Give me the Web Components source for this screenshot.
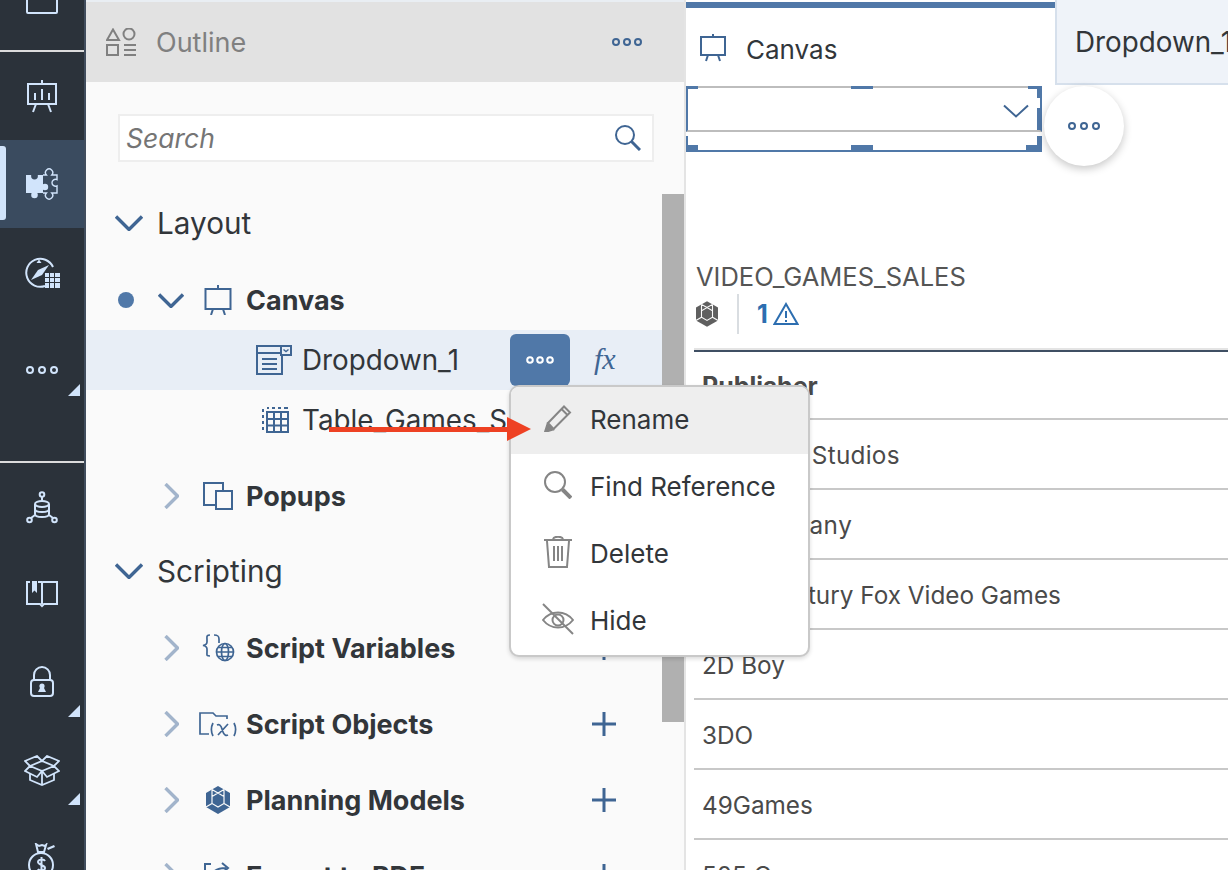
<!DOCTYPE html>
<html lang="en">
<head>
<meta charset="utf-8">
<title>Outline</title>
<style>
  html, body { margin: 0; padding: 0; height: 870px; overflow: hidden; background: #fff; }
  body { font-family: Inter, "Liberation Sans", sans-serif; color: #32363a; }
  svg { display: block; }
</style>
</head>
<body>

<app-shell>
  <side-rail slot="rail">
    <rail-button cut style="height:50px">
      <svg width="32" height="26" viewBox="0 0 32 26" fill="none" stroke="#d1e4fb" stroke-width="2"><path d="M1 -4V18a1 1 0 0 0 1 1H30a1 1 0 0 0 1-1V-4"/></svg>
    </rail-button>
    <rail-rule></rail-rule>
    <rail-button>
      <svg width="32" height="34" viewBox="0 0 32 34" fill="none" stroke="#d1e4fb" stroke-width="2"><path d="M16 1v4M2 5h28v20H2zM10 25l-3 8M22 25l3 8" /><path d="M9 21v-7M16 21V10M23 21v-7"/></svg>
    </rail-button>
    <rail-button active>
      <svg width="32" height="32" viewBox="0 0 32 32" fill="none"><rect x="0" y="7" width="17" height="18" fill="#d1e4fb"/><circle cx="8.5" cy="8" r="3.4" fill="#3a4b5f"/><circle cx="8.5" cy="27" r="3.3" fill="#d1e4fb"/><circle cx="19" cy="19" r="3.2" fill="#d1e4fb"/><path d="M17 7h3.4a3.6 3.6 0 1 1 5.4 0H31v4.6a3.5 3.5 0 1 0 0 6.3V25h-5.2a3.6 3.6 0 1 1-5.4 0H17" stroke="#d1e4fb" stroke-width="1.4"/></svg>
    </rail-button>
    <rail-button>
      <svg width="36" height="32" viewBox="0 0 36 32" fill="none"><path d="M21 30a14 14 0 1 1 8-19" stroke="#d1e4fb" stroke-width="2"/><path d="M7 24l7-10 11-5-7 10z" fill="#d1e4fb"/><path d="M15 3.5l2.5 3.5h-5z" fill="#d1e4fb"/><rect x="21" y="17" width="15" height="15" fill="#d1e4fb"/><path d="M21 21.500h15M21 26.500h15M25.500 17v15M30.500 17v15" stroke="#2b323a" stroke-width="1"/></svg>
    </rail-button>
    <rail-button more style="margin-top:10px;--tri-bottom:18px">
      <dots-icon color="#d1e4fb"></dots-icon>
    </rail-button>
    <rail-rule style="margin-top:47px"></rail-rule>
    <rail-button>
      <svg width="32" height="33" viewBox="0 0 32 33" fill="none" stroke="#d1e4fb" stroke-width="2"><circle cx="16" cy="3.5" r="2.3"/><path d="M16 6v4"/><ellipse cx="16" cy="13" rx="7" ry="3"/><path d="M9 13v10c0 4 14 4 14 0V13M9 18c0 4 14 4 14 0"/><circle cx="3.5" cy="29" r="2.3"/><circle cx="28.5" cy="29" r="2.3"/><path d="M9 24l-4 3M23 24l4 3"/></svg>
    </rail-button>
    <rail-button style="--nudge:-3px">
      <svg width="32" height="28" viewBox="0 0 32 28" fill="none" stroke="#d1e4fb" stroke-width="2"><path d="M4 2H1v22h13l2 2 2-2h13V2H17a2 2 0 0 0-1 1v21"/><path d="M12 2H16M16 24V2"/><path d="M6 1h5v12l-2.500-2.500L6 13z" fill="#d1e4fb" stroke="none"/></svg>
    </rail-button>
    <rail-button more style="--nudge:-3px">
      <svg width="24" height="31" viewBox="0 0 24 31" fill="none" stroke="#d1e4fb" stroke-width="2"><path d="M4 14V9a8 8 0 0 1 16 0v5"/><rect x="1" y="14" width="22" height="16" rx="3"/><circle cx="12" cy="20" r="2.600" fill="#d1e4fb" stroke="none"/><path d="M8 26l2-4h4l2 4z" fill="#d1e4fb" stroke="none"/></svg>
    </rail-button>
    <rail-button more style="--nudge:-2px">
      <svg width="36" height="31" viewBox="0 0 36 31" fill="none" stroke="#d1e4fb" stroke-width="1.800"><path d="M6 11L1 6l12-5 5 5 5-5 12 5-5 5-12-5z"/><path d="M6 11L1 16l12 6 5-6 5 6 12-6-5-5-12 5z"/><path d="M6 18v7l12 5 12-5v-7M18 16v14"/></svg>
    </rail-button>
    <rail-button style="--nudge:-2px">
      <svg width="28" height="30" viewBox="0 0 28 30" fill="none" stroke="#d1e4fb" stroke-width="2"><circle cx="13" cy="22" r="12"/><path d="M8 1l3 2 3-1 3 1 1-1-2 7h-6z"/><path d="M19 5l7-3 1 2-7 3z" fill="#d1e4fb" stroke="none"/><path d="M17 18c-1-2-7-2-7 1s7 3 7 6-6 3-7 1M13.500 14v16"/></svg>
    </rail-button>
  </side-rail>

  <outline-panel slot="outline">
    <outline-section label="Layout" open></outline-section>
    <outline-row label="Canvas" chevron="down" dot style="margin-top:17px">
      <svg slot="icon" width="28" height="30" viewBox="0 0 28 30" fill="none" stroke="#3f6593" stroke-width="2"><path d="M14 0v4M1.500 4h25v20h-25zM9 24l-2 6M19 24l2 6"/></svg>
    </outline-row>
    <outline-row label="Dropdown_1" leaf selected>
      <svg slot="icon" width="36" height="30" viewBox="0 0 36 30" fill="none" stroke="#3f6593" stroke-width="2"><path d="M25 1H1v28h25V10"/><path d="M1 8h24M6 14h15M6 19h15M6 24h15"/><rect x="25" y="1" width="10" height="9"/><path d="M27.500 4.500l2.500 2 2.500-2" stroke-width="1.400"/></svg>
      <more-button slot="actions" style="margin-right:24px"></more-button>
      <span slot="actions" class="fx">fx</span>
    </outline-row>
    <outline-row label="Table_Games_Sales" leaf style="--leaf-shift:4px">
      <svg slot="icon" width="28" height="26" viewBox="0 0 28 26" fill="none" stroke="#3f6593" stroke-width="2"><path d="M5 1h2M10 1h3M16 1h3M22 1h4" /><path d="M1 2v3M1 8v3M1 14v3M1 20v3"/><path d="M5 5h21v20H5zM5 12h21M5 18.500h21M12 5v20M19 5v20"/></svg>
    </outline-row>
    <outline-row label="Popups" chevron="right" style="margin-top:16px">
      <svg slot="icon" width="30" height="28" viewBox="0 0 30 28" fill="none" stroke="#3f6593" stroke-width="2"><path d="M13 23H1V1h19v8"/><path d="M13 9h16v18H13z"/></svg>
    </outline-row>
    <outline-section label="Scripting" open style="margin-top:15px"></outline-section>
    <outline-row label="Script Variables" chevron="right" style="margin-top:17px">
      <svg slot="icon" width="34" height="28" viewBox="0 0 34 28" fill="none" stroke="#3f6593" stroke-width="1.700"><path d="M9 1C5 1 6 3 6 6v2c0 2-1 3-4 3.500C5 12 6 13 6 15v3c0 3-1 4 3 4M13 1c4 0 5 1 5 4v4"/><circle cx="24" cy="18" r="8.500"/><ellipse cx="24" cy="18" rx="3.500" ry="8.500"/><path d="M15.500 18h17M17 13.500h14M17 22.500h14"/></svg>
      <plus-icon slot="actions" style="margin-right:45px"></plus-icon>
    </outline-row>
    <outline-row label="Script Objects" chevron="right" style="margin-top:16px">
      <svg slot="icon" width="38" height="25" viewBox="0 0 38 25" fill="none" stroke="#3f6593" stroke-width="1.700"><path d="M10 22H1V1h13l3 3h11v3"/><path d="M14 11c-2 4-2 9 0 13M35 11c2 4 2 9 0 13"/><path d="M18 13c2-1 4 0 5 4l1 3c1 3 3 4 5 3M19 23l10-11"/></svg>
      <plus-icon slot="actions" style="margin-right:45px"></plus-icon>
    </outline-row>
    <outline-row label="Planning Models" chevron="right" style="margin-top:16px">
      <cube-icon slot="icon" color="#3f6593" size="24"></cube-icon>
      <plus-icon slot="actions" style="margin-right:45px"></plus-icon>
    </outline-row>
    <outline-row label="Export to PDF" chevron="right" style="margin-top:16px">
      <svg slot="icon" width="30" height="28" viewBox="0 0 30 28" fill="none" stroke="#3f6593" stroke-width="2"><path d="M8 2H2v24h24v-8"/><path d="M9 14c1-6 6-8 14-8M19 1l6 5-6 5"/></svg>
      <plus-icon slot="actions" style="margin-right:45px"></plus-icon>
    </outline-row>
  </outline-panel>

  <canvas-pane slot="canvas">
    <games-table title="VIDEO_GAMES_SALES" head="Publisher">
      <table-row style="letter-spacing:.27px">10TACLE Studios</table-row>
      <table-row style="letter-spacing:.6px">1C Company</table-row>
      <table-row>20th Century Fox Video Games</table-row>
      <table-row>2D Boy</table-row>
      <table-row>3DO</table-row>
      <table-row>49Games</table-row>
      <table-row>505 Games</table-row>
    </games-table>
  </canvas-pane>

  <context-menu slot="overlay">
    <menu-entry label="Rename" active>
      <svg width="28" height="28" viewBox="0 0 28 28" fill="none" stroke="#858585" stroke-width="2"><path d="M4 19L20 2.500l6 6L9.500 25z"/><path d="M17.500 5l6 6"/><path d="M3.500 20l-2.500 8 8-2.500z" fill="#858585"/></svg>
    </menu-entry>
    <menu-entry label="Find Reference">
      <svg width="28" height="28" viewBox="0 0 28 28" fill="none" stroke="#858585" stroke-width="2"><circle cx="11" cy="11" r="10"/><path d="M18.500 18.500L27 27" stroke-width="4"/></svg>
    </menu-entry>
    <menu-entry label="Delete">
      <svg width="28" height="32" viewBox="0 0 28 32" fill="none" stroke="#858585" stroke-width="2"><path d="M0 4h28M9 3c1-3 9-3 10 0"/><path d="M3 5l2 26h18l2-26M10 10v15M14 10v15M18 10v15"/></svg>
    </menu-entry>
    <menu-entry label="Hide">
      <svg width="32" height="32" viewBox="0 0 32 32" fill="none" stroke="#858585" stroke-width="2"><path d="M1 1l30 30"/><path d="M1 17c8-10 22-10 30 0-8 10-22 10-30 0z"/><circle cx="16" cy="17" r="5.500"/></svg>
    </menu-entry>
  </context-menu>

  <red-arrow slot="overlay"></red-arrow>
</app-shell>

<script>
/* top level layout: rail, outline column, canvas, and a layer for the popup menu */
class AppShell extends HTMLElement {
  constructor() {
    super();
    this.attachShadow({ mode: 'open' }).innerHTML = `
      <style>
        :host { display: flex; position: relative; width: 1228px; height: 870px; overflow: hidden; }
      </style>
      <slot name="rail"></slot>
      <slot name="outline"></slot>
      <slot name="canvas"></slot>
      <slot name="overlay"></slot>
    `;
  }
}

class SideRail extends HTMLElement {
  constructor() {
    super();
    this.attachShadow({ mode: 'open' }).innerHTML = `
      <style>
        :host {
          display: flex; flex-direction: column; flex: none;
          width: 84px; height: 870px; overflow: hidden;
          background: #2b323a; border-right: 2px solid #414d5d;
        }
      </style>
      <slot></slot>
    `;
  }
}

class RailRule extends HTMLElement {
  constructor() {
    super();
    this.attachShadow({ mode: 'open' }).innerHTML = `
      <style>:host { display: block; flex: none; height: 2px; background: #dcdcdc; }</style>
    `;
  }
}

class RailButton extends HTMLElement {
  constructor() {
    super();
    this.attachShadow({ mode: 'open' }).innerHTML = `
      <style>
        :host {
          display: flex; flex: none; position: relative; height: 88px;
          align-items: center; justify-content: center;
        }
        :host([active]) { background: #3a4b5f; }
        :host([cut]) { align-items: flex-end; padding-bottom: 30px; height: 20px !important; }
        .pill { display: none; position: absolute; left: 0; top: 6px; bottom: 8px; width: 6px; background: #d1e4fb; border-radius: 0 3px 3px 0; }
        :host([active]) .pill { display: block; }
        .tri { display: none; position: absolute; right: 4px; bottom: var(--tri-bottom, 10px); width: 0; height: 0; border-left: 12px solid transparent; border-bottom: 12px solid #d1e4fb; }
        :host([more]) .tri { display: block; }
        .wrap { margin-top: var(--nudge, 0); }
      </style>
      <span class="pill"></span>
      <div class="wrap"><slot></slot></div>
      <span class="tri"></span>
    `;
  }
}

class DotsIcon extends HTMLElement {
  constructor() {
    super();
    const c = this.getAttribute('color') || '#3f6593';
    const narrow = this.hasAttribute('narrow');
    const step = narrow ? 11 : 12;
    const w = step * 2 + 8;
    this.attachShadow({ mode: 'open' }).innerHTML = `
      <style>:host { display: block; }</style>
      <svg style="display:block" width="${w}" height="8" viewBox="0 0 ${w} 8" fill="none" stroke="${c}" stroke-width="2">
        <circle cx="4" cy="4" r="3"/><circle cx="${4 + step}" cy="4" r="3"/><circle cx="${4 + step * 2}" cy="4" r="3"/>
      </svg>
    `;
  }
}

class CubeIcon extends HTMLElement {
  constructor() {
    super();
    const c = this.getAttribute('color');
    const s = +this.getAttribute('size');
    this.attachShadow({ mode: 'open' }).innerHTML = `
      <style>:host { display: block; }</style>
      <svg style="display:block" width="${s}" height="${Math.round(s * 28 / 24)}" viewBox="0 0 24 28" fill="none">
        <path d="M12 0l12 7v14l-12 7-12-7V7z" fill="${c}"/>
        <path d="M12 7l6 3.500v7L12 21l-6-3.500v-7zM6 3.500v7M18 3.500v7M6 3.500L12 7l6-3.500M6 17.500L0 21M18 17.500L24 21" stroke="#fafafa" stroke-width="1.200"/>
      </svg>
    `;
  }
}

class PlusIcon extends HTMLElement {
  constructor() {
    super();
    this.attachShadow({ mode: 'open' }).innerHTML = `
      <style>:host { display: block; width: 26px; height: 26px; }</style>
      <svg style="display:block" width="26" height="26" viewBox="0 0 26 26" stroke="#3f6593" stroke-width="3"><path d="M13 1v24M1 13h24"/></svg>
    `;
  }
}

class MoreButton extends HTMLElement {
  constructor() {
    super();
    this.attachShadow({ mode: 'open' }).innerHTML = `
      <style>
        :host {
          display: flex; align-items: center; justify-content: center;
          width: 60px; height: 52px; margin-top: 4px; align-self: flex-start;
          background: #5078a8; border-radius: 6px;
        }
        svg { display: block; }
      </style>
      <svg width="28" height="8" viewBox="0 0 28 8" fill="none" stroke="#fff" stroke-width="2">
        <circle cx="4" cy="4" r="2.800"/><circle cx="14" cy="4" r="2.800"/><circle cx="24" cy="4" r="2.800"/>
      </svg>
    `;
  }
}

class OutlinePanel extends HTMLElement {
  constructor() {
    super();
    this.attachShadow({ mode: 'open' }).innerHTML = `
      <style>
        :host {
          display: flex; flex-direction: column; flex: none; position: relative;
          width: 598px; height: 870px; background: #fafafa;
          border-top: 2px solid #e9eef3; box-sizing: border-box;
        }
        .head {
          display: flex; flex: none; align-items: center; height: 80px;
          padding: 0 42px 0 20px; background: #e2e2e2; color: #808080; font-size: 27px;
        }
        .head svg { display: block; margin-right: 20px; }
        .head .name { flex: 1; }
        .search {
          display: flex; flex: none; align-items: center; justify-content: space-between;
          margin: 32px 30px 31px 32px; height: 48px; box-sizing: border-box;
          padding: 0 11px 0 6px;
          background: #fff; border: 2px solid #eeeeee;
          font-size: 26.500px; font-style: italic; color: #757575;
        }
        .tree { width: 576px; }
        .bar { position: absolute; left: 576px; top: 192px; width: 22px; height: 528px; background: #b0b0b0; }
      </style>
      <div class="head">
        <svg width="30" height="28" viewBox="0 0 30 28" fill="none" stroke="#808080" stroke-width="2">
          <path d="M7 1.500l6 10.500H1zM1 17h11v10H1z"/><circle cx="23" cy="6" r="5.500"/><path d="M18 17h12M18 22h12M18 27h12"/>
        </svg>
        <span class="name">Outline</span>
        <dots-icon narrow></dots-icon>
      </div>
      <div class="search">
        <span>Search</span>
        <svg width="26" height="26" viewBox="0 0 26 26" fill="none" stroke="#3f6593" stroke-width="2"><circle cx="10" cy="10" r="9"/><path d="M16.500 16.500L25 25" stroke-width="3"/></svg>
      </div>
      <div class="tree"><slot></slot></div>
      <div class="bar"></div>
    `;
  }
}

class OutlineSection extends HTMLElement {
  constructor() {
    super();
    this.attachShadow({ mode: 'open' }).innerHTML = `
      <style>
        :host { display: flex; align-items: center; height: 60px; padding-left: 29px; font-size: 29.700px; color: #32363a; }
        svg { display: block; margin-right: 14px; }
      </style>
      <svg width="28" height="16" viewBox="0 0 28 16" fill="none" stroke="#3f6593" stroke-width="3.400"><path d="M1 1.500l13 13 13-13"/></svg>
      <span>${this.getAttribute('label')}</span>
    `;
  }
}

class OutlineRow extends HTMLElement {
  constructor() {
    super();
    const chevron = this.getAttribute('chevron');
    let chev = '';
    if (chevron === 'down') {
      chev = '<svg width="26" height="15" viewBox="0 0 26 15" fill="none" stroke="#3f6593" stroke-width="3.400"><path d="M1 1.500l12 12 12-12"/></svg>';
    } else if (chevron === 'right') {
      chev = '<svg width="15" height="26" viewBox="0 0 15 26" fill="none" stroke="#a2b4cb" stroke-width="3.400"><path d="M1.500 1l12 12-12 12"/></svg>';
    }
    this.attachShadow({ mode: 'open' }).innerHTML = `
      <style>
        :host { display: flex; align-items: center; height: 60px; font-size: 27px; color: #32363a; font-weight: 700; }
        :host([leaf]) { font-weight: 400; font-size: 27.800px; }
        :host([selected]) { background: #e8eef6; }
        .mark { flex: none; display: flex; width: 70px; box-sizing: border-box; padding-left: 32px; }
        .dot { display: none; width: 16px; height: 16px; border-radius: 50%; background: #5078a8; }
        :host([dot]) .dot { display: block; }
        .chev { flex: none; display: flex; align-items: center; justify-content: center; width: 30px; }
        .icon { flex: none; display: flex; align-items: center; justify-content: center; width: 60px; box-sizing: border-box; padding-left: 4px; }
        :host([leaf]) .chev { width: 90px; }
        :host([leaf]) .icon { width: 56px; padding-left: var(--leaf-shift, 0); }
        .label { flex: 1; white-space: nowrap; overflow: hidden; }
        .actions { display: flex; flex: none; align-items: center; height: 100%; }
        ::slotted(.fx) { display: block; width: 68px; font: italic 30px "Liberation Serif", serif; color: #3f6593; margin-top: -3px; }
      </style>
      <span class="mark"><span class="dot"></span></span>
      <span class="chev">${chev}</span>
      <span class="icon"><slot name="icon"></slot></span>
      <span class="label">${this.getAttribute('label')}</span>
      <span class="actions"><slot name="actions"></slot></span>
    `;
  }
}

class CanvasPane extends HTMLElement {
  constructor() {
    super();
    this.attachShadow({ mode: 'open' }).innerHTML = `
      <style>
        :host {
          display: flex; flex-direction: column; flex: 1; min-width: 0; position: relative;
          height: 870px; background: #fff; border-left: 2px solid #e4e4e4; box-sizing: border-box;
          padding-top: 2px;
        }
        .tabs { display: flex; flex: none; height: 84px; }
        .tab { display: flex; box-sizing: border-box; font-size: 26px; white-space: nowrap; }
        .on { flex: none; width: 369px; align-items: center; padding: 2px 0 0 14px; gap: 20px; border-top: 6px solid #5078a8; }
        .on span { margin-top: 3px; }
        .off {
          flex: 1; min-width: 0; overflow: hidden; margin-top: -2px; height: 85px; padding: 25px 0 0 18px; font-size: 27.800px;
          background: #eff3f9; border-left: 2px solid #d6e0ec; border-bottom: 2px solid #d6e0ec;
        }
        .frame {
          position: relative; flex: none; box-sizing: border-box; width: 356px; height: 66px;
          border-bottom: 2px solid #5078a8;
        }
        .input {
          display: flex; align-items: center; justify-content: flex-end; box-sizing: border-box;
          height: 46px; padding: 3px 11px 0 0; background: #fff;
          border-top: 2px solid #bdbdbd; border-bottom: 2px solid #bdbdbd;
          border-left: 2px solid #5078a8; border-right: 2px solid #5078a8; margin-top: 0;
        }
        .h { position: absolute; background: #5078a8; }
        .circle {
          position: absolute; left: 358px; top: 86px; width: 80px; height: 80px; border-radius: 50%;
          background: #fff; box-shadow: 0 3px 8px rgba(0,0,0,.22);
          display: flex; align-items: center; justify-content: center;
        }
        .gap { flex: none; height: 110px; }
      </style>
      <div class="tabs">
        <div class="tab on">
          <svg style="display:block" width="26" height="28" viewBox="0 0 26 28" fill="none" stroke="#3f6593" stroke-width="2"><path d="M13 0v3M1 3h24v18H1zM8 21l-2 6M18 21l2 6"/></svg>
          <span>Canvas</span>
        </div>
        <div class="tab off">Dropdown_1</div>
      </div>
      <div class="frame">
        <div class="input">
          <svg style="display:block" width="26" height="14" viewBox="0 0 26 14" fill="none" stroke="#3f6593" stroke-width="2"><path d="M1 1.500l12 11 12-11"/></svg>
        </div>
        <span class="h" style="left:0;top:0;width:12px;height:3px"></span>
        <span class="h" style="left:165px;top:0;width:22px;height:3px"></span>
        <span class="h" style="right:0;top:0;width:14px;height:3px"></span>
        <span class="h" style="right:0;top:0;width:5px;height:12px"></span>
        <span class="h" style="right:0;top:22px;width:5px;height:22px"></span>
        <span class="h" style="right:0;bottom:0;width:5px;height:14px"></span>
        <span class="h" style="left:0;bottom:0;width:2px;height:14px"></span>
        <span class="h" style="left:0;bottom:0;width:12px;height:5px"></span>
        <span class="h" style="left:165px;bottom:0;width:22px;height:5px"></span>
        <span class="h" style="right:0;bottom:0;width:16px;height:5px"></span>
      </div>
      <div class="gap"></div>
      <slot></slot>
      <div class="circle"><dots-icon></dots-icon></div>
    `;
  }
}

class GamesTable extends HTMLElement {
  constructor() {
    super();
    this.attachShadow({ mode: 'open' }).innerHTML = `
      <style>
        :host { display: block; padding-left: 8px; color: #555; }
        .title { font-size: 25.500px; line-height: 30px; padding-left: 2px; white-space: nowrap; height: 32px; }
        .meta { display: flex; align-items: center; height: 40px; margin-bottom: 16px; padding-left: 2px; }
        .meta svg { display: block; }
        .sep { width: 2px; height: 40px; background: #d9dde1; margin: 0 18px 0 19px; }
        .one { font-size: 25px; font-weight: 700; color: #2d6eb0; margin-right: 5px; }
        .head {
          height: 70px; box-sizing: border-box; padding: 19px 0 0 8px;
          border-top: 2px solid #3f4f63; box-shadow: 0 -2px 0 #e4e4e4;
          border-bottom: 2px solid #c8c8c8;
          font-size: 25px; line-height: 30px; font-weight: 700; color: #4a4a4a;
        }
      </style>
      <div class="title">${this.getAttribute('title')}</div>
      <div class="meta">
        <cube-icon color="#5f5f5f" size="22"></cube-icon>
        <span class="sep"></span>
        <span class="one">1</span>
        <svg width="26" height="24" viewBox="0 0 26 24" fill="none" stroke="#2d6eb0" stroke-width="2"><path d="M13 2L1.500 22h23zM13 9v7M13 18v2"/></svg>
      </div>
      <div class="head">${this.getAttribute('head')}</div>
      <slot></slot>
    `;
  }
}

class TableRow extends HTMLElement {
  constructor() {
    super();
    this.attachShadow({ mode: 'open' }).innerHTML = `
      <style>
        :host {
          display: flex; align-items: center; height: 70px; box-sizing: border-box;
          padding: 2px 0 0 8px; border-bottom: 2px solid #c8c8c8;
          font-size: 24.300px; color: #4a4a4a; white-space: nowrap;
        }
      </style>
      <slot></slot>
    `;
  }
}

class ContextMenu extends HTMLElement {
  constructor() {
    super();
    this.attachShadow({ mode: 'open' }).innerHTML = `
      <style>
        :host {
          display: block; position: absolute; left: 509px; top: 385px; width: 301px; z-index: 5;
          box-sizing: border-box; background: #fff; border: 2px solid #c9c9c9; border-radius: 10px;
          box-shadow: 0 2px 4px rgba(0,0,0,.14); overflow: hidden;
        }
      </style>
      <slot></slot>
    `;
  }
}

class MenuEntry extends HTMLElement {
  constructor() {
    super();
    this.attachShadow({ mode: 'open' }).innerHTML = `
      <style>
        :host { display: flex; align-items: center; height: 67px; font-size: 26px; color: #32363a; }
        :host([active]) { background: #eeeeee; }
        .ic { flex: none; display: flex; align-items: center; justify-content: center; width: 79px; box-sizing: border-box; padding: 0 0 6px 14px; }
        .tx { margin-top: -3px; }
      </style>
      <span class="ic"><slot></slot></span>
      <span class="tx">${this.getAttribute('label')}</span>
    `;
  }
}

class RedArrow extends HTMLElement {
  constructor() {
    super();
    this.attachShadow({ mode: 'open' }).innerHTML = `
      <style>:host { display: block; position: absolute; left: 329px; top: 417px; z-index: 6; }</style>
      <svg style="display:block" width="202" height="24" viewBox="0 0 202 24"><path d="M0 10h178V0l24 12-24 12V15H0z" fill="#ee4123"/></svg>
    `;
  }
}

customElements.define('dots-icon', DotsIcon);
customElements.define('cube-icon', CubeIcon);
customElements.define('plus-icon', PlusIcon);
customElements.define('more-button', MoreButton);
customElements.define('app-shell', AppShell);
customElements.define('side-rail', SideRail);
customElements.define('rail-rule', RailRule);
customElements.define('rail-button', RailButton);
customElements.define('outline-panel', OutlinePanel);
customElements.define('outline-section', OutlineSection);
customElements.define('outline-row', OutlineRow);
customElements.define('canvas-pane', CanvasPane);
customElements.define('games-table', GamesTable);
customElements.define('table-row', TableRow);
customElements.define('context-menu', ContextMenu);
customElements.define('menu-entry', MenuEntry);
customElements.define('red-arrow', RedArrow);
</script>
</body>
</html>
